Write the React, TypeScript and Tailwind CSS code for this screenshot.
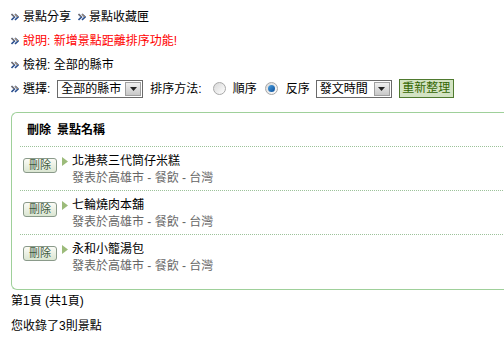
import React from 'react';

const font = { fontFamily: '"Liberation Sans", "Noto Sans CJK TC", sans-serif' };

function Bullet() {
    return (
        <svg width="8" height="8" viewBox="0 0 8 8" className="shrink-0">
            <path d="M0.5 1 L3.5 4 L0.5 7" fill="none" stroke="#2a4f8f" strokeWidth="1.6" />
            <path d="M4 1 L7 4 L4 7" fill="none" stroke="#2a4f8f" strokeWidth="1.6" />
            <path d="M0.5 1 L3.5 4" fill="none" stroke="#e8a040" strokeWidth="0.7" />
            <path d="M4 1 L7 4" fill="none" stroke="#e8a040" strokeWidth="0.7" />
        </svg>
    );
}

function FakeSelect({ label, width }: { label: string; width: string }) {
    return (
        <div className={`flex items-stretch h-[18px] border border-[#6a6a6a] bg-white shrink-0 ${width}`}>
            <span className="flex-1 pl-[3px] leading-[16px] text-[12px] text-black whitespace-nowrap overflow-hidden">{label}</span>
            <span className="w-[16px] m-[1px] flex items-center justify-center bg-gradient-to-b from-[#f0f0f0] to-[#c8c8c8] border border-[#a0a0a0]">
                <svg width="7" height="4" viewBox="0 0 7 4">
                    <path d="M0 0 H7 L3.5 4 Z" fill="#222" />
                </svg>
            </span>
        </div>
    );
}

function Radio({ checked }: { checked?: boolean }) {
    return (
        <span className="w-[13px] h-[13px] rounded-full border border-[#a8a8a8] bg-gradient-to-br from-[#d8d8d8] to-white flex items-center justify-center">
            {checked && <span className="w-[7px] h-[7px] rounded-full bg-gradient-to-br from-[#4aa0e0] to-[#0a4f9a]" />}
        </span>
    );
}

const spots = ['北港蔡三代筒仔米糕', '七輪燒肉本舖', '永和小籠湯包'];

export default function App() {
    return (
        <div className="w-[504px] h-[357px] overflow-hidden bg-white text-[12px] text-black whitespace-nowrap" style={font}>
            {/* Top lines */}
            <div className="pt-[5px] pl-[11px]">
                <div className="flex items-center h-[24px] gap-[3px]">
                    <Bullet />
                    <span className="ml-[1px]">景點分享</span>
                    <span className="ml-[4px]"><Bullet /></span>
                    <span>景點收藏匣</span>
                </div>
                <div className="flex items-center h-[24px] gap-[4px] text-[#ff0000]">
                    <Bullet />
                    <span>說明: 新增景點距離排序功能!</span>
                </div>
                <div className="flex items-center h-[24px] gap-[4px]">
                    <Bullet />
                    <span>檢視: 全部的縣市</span>
                </div>
                <div className="flex items-center h-[23px] gap-[4px]">
                    <Bullet />
                    <span>選擇:</span>
                    <span className="ml-[3px]"><FakeSelect label="全部的縣市" width="w-[86px]" /></span>
                    <span className="ml-[3px]">排序方法:</span>
                    <span className="ml-[7px]"><Radio /></span>
                    <span className="ml-[3px]">順序</span>
                    <span className="ml-[4px]"><Radio checked /></span>
                    <span className="ml-[4px]">反序</span>
                    <span className="ml-[2px]"><FakeSelect label="發文時間" width="w-[76px]" /></span>
                    <button className="ml-[3px] h-[19px] w-[55px] border border-[#4f7a2f] bg-[#d3e3c3] text-[#336600] text-[12px] leading-[17px]">
                        重新整理
                    </button>
                </div>
            </div>

            {/* Box */}
            <div className="mt-[12px] ml-[11px] w-[520px] border border-r-0 border-[#9fd09a] rounded-l-[6px] pb-[11px]">
                <div className="ml-[8px] pl-[7px] h-[34px] flex items-center font-bold border-b border-dotted border-[#9cc29a]">
                    <span>刪除</span>
                    <span className="ml-[6px]">景點名稱</span>
                </div>
                {spots.map((name, i) => (
                    <div
                        key={name}
                        className={`ml-[8px] pt-[6px] pb-[3px] flex items-start ${i < spots.length - 1 ? 'border-b border-dotted border-[#9cc29a]' : ''}`}
                    >
                        <button className="mt-[5px] ml-[3px] h-[15px] w-[34px] rounded-[3px] border border-[#8a9a8a] bg-gradient-to-b from-[#fbfbf6] to-[#dbe6d2] text-[11px] leading-[13px] text-[#3d5a3d]">
                            刪除
                        </button>
                        <svg width="6" height="9" viewBox="0 0 6 9" className="ml-[5px] mt-[4px]">
                            <path d="M0 0 L6 4.5 L0 9 Z" fill="#9cbb7a" />
                        </svg>
                        <div className="ml-[4px] leading-[17px]">
                            <div>{name}</div>
                            <div className="text-[#666]">發表於高雄市 - 餐飲 - 台灣</div>
                        </div>
                    </div>
                ))}
            </div>

            {/* Footer */}
            <div className="pl-[11px]">
                <div className="h-[22px] flex items-center">第1頁 (共1頁)</div>
                <div className="mt-[3px] h-[22px] flex items-center">您收錄了3則景點</div>
            </div>
        </div>
    );
}
